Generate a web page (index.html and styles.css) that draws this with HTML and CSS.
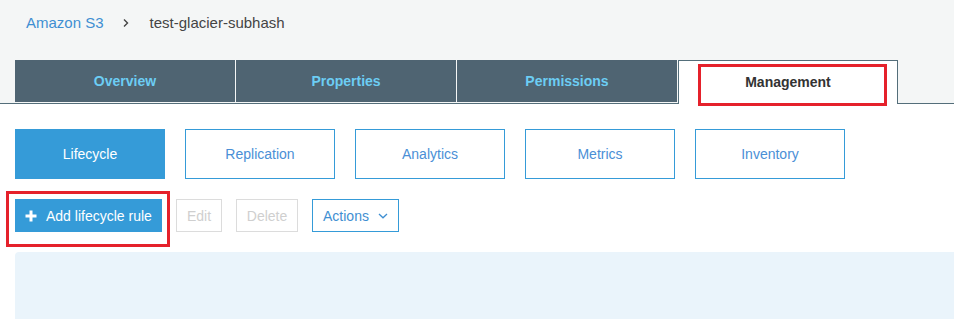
FILE: index.html
```html
<!DOCTYPE html>
<html>
<head>
<meta charset="utf-8">
<link rel="stylesheet" href="styles.css">
</head>
<body>
<div class="header">
  <div class="crumbs">
    <a class="crumb-link">Amazon S3</a>
    <span class="crumb-sep">
      <svg width="8" height="10" viewBox="0 0 8 10"><path d="M2 1.5 L5.5 5 L2 8.5" fill="none" stroke="#444" stroke-width="1.4"/></svg>
    </span>
    <span class="crumb-current">test-glacier-subhash</span>
  </div>
  <div class="tabs">
    <div class="tab">Overview</div>
    <div class="tab">Properties</div>
    <div class="tab">Permissions</div>
    <div class="tab tab-active">Management<span class="mark mark-tab"></span></div>
  </div>
</div>
<div class="main">
  <div class="subtabs">
    <div class="subtab subtab-active">Lifecycle</div>
    <div class="subtab">Replication</div>
    <div class="subtab">Analytics</div>
    <div class="subtab">Metrics</div>
    <div class="subtab">Inventory</div>
  </div>
  <div class="actions">
    <div class="add-wrap">
      <button class="btn btn-primary">
        <svg class="plus" width="12" height="12" viewBox="0 0 12 12"><path d="M6 0.5 V11.5 M0.5 6 H11.5" stroke="#fff" stroke-width="3"/></svg>
        Add lifecycle rule
      </button>
      <span class="mark mark-add"></span>
    </div>
    <button class="btn btn-disabled btn-edit">Edit</button>
    <button class="btn btn-disabled btn-delete">Delete</button>
    <button class="btn btn-outline">Actions
      <svg class="chev" width="10" height="6" viewBox="0 0 10 6"><path d="M1 1 L5 4.8 L9 1" fill="none" stroke="#3f8fd2" stroke-width="1.3"/></svg>
    </button>
  </div>
  <div class="panel"></div>
</div>
</body>
</html>
```
FILE: styles.css
```css
* { box-sizing: border-box; }
html, body { margin: 0; padding: 0; }
body {
  background: #fff;
  font-family: "Liberation Sans", Arial, sans-serif;
  width: 954px;
  height: 319px;
  overflow: hidden;
}
.header {
  background: #f4f6f6;
  padding-top: 14px;
}
.crumbs {
  display: flex;
  align-items: center;
  padding-left: 26px;
  height: 18px;
  font-size: 15px;
  line-height: 18px;
}
.crumb-link { color: #3f8fd2; }
.crumb-sep {
  display: flex;
  align-items: center;
  margin-left: 18px;
  margin-right: 20px;
}
.crumb-current { color: #444; }
.tabs {
  display: flex;
  gap: 1px;
  margin-top: 28px;
  padding-left: 15px;
  border-bottom: 1px solid #546e7a;
  height: 44px;
}
.tab {
  width: 220px;
  height: 42px;
  background: #4f6472;
  color: #6ccdf4;
  font-weight: bold;
  font-size: 14px;
  display: flex;
  align-items: center;
  justify-content: center;
}
.tab-active {
  position: relative;
  height: 44px;
  background: #fff;
  color: #333;
  border: 1px solid #546e7a;
  border-bottom: none;
  padding-bottom: 2px;
}
.mark {
  position: absolute;
  border: 3px solid #e5212b;
}
.mark-tab {
  left: 19px;
  top: 3px;
  width: 189px;
  height: 42px;
}
.main {
  padding: 25px 0 0 15px;
}
.subtabs {
  display: flex;
  gap: 20px;
}
.subtab {
  width: 150px;
  height: 50px;
  border: 1px solid #359bd8;
  color: #4a8fd6;
  font-size: 14px;
  display: flex;
  align-items: center;
  justify-content: center;
}
.subtab-active {
  background: #359bd8;
  color: #fff;
}
.actions {
  display: flex;
  gap: 14px;
  margin-top: 20px;
  height: 33px;
}
.add-wrap { position: relative; display: flex; }
.mark-add {
  left: -9px;
  top: -8px;
  width: 164px;
  height: 56px;
}
.btn {
  font-family: "Liberation Sans", Arial, sans-serif;
  font-size: 14px;
  height: 33px;
  padding: 0;
  display: flex;
  align-items: center;
  justify-content: center;
  background: #fff;
  margin: 0;
}
.btn-primary {
  width: 147px;
  background: #359bd8;
  border: none;
  color: #fff;
  justify-content: flex-start;
  padding-left: 10px;
}
.plus { margin-right: 9px; }
.btn-disabled {
  border: 1px solid #dcdcdc;
  color: #cfcfcf;
}
.btn-edit { width: 46px; }
.btn-delete { width: 62px; }
.btn-outline {
  width: 87px;
  border: 1px solid #359bd8;
  color: #3f8fd2;
}
.chev { margin-left: 9px; }
.panel {
  margin-top: 20px;
  height: 80px;
  background: #eaf4fb;
  border-top-left-radius: 4px;
}
```
